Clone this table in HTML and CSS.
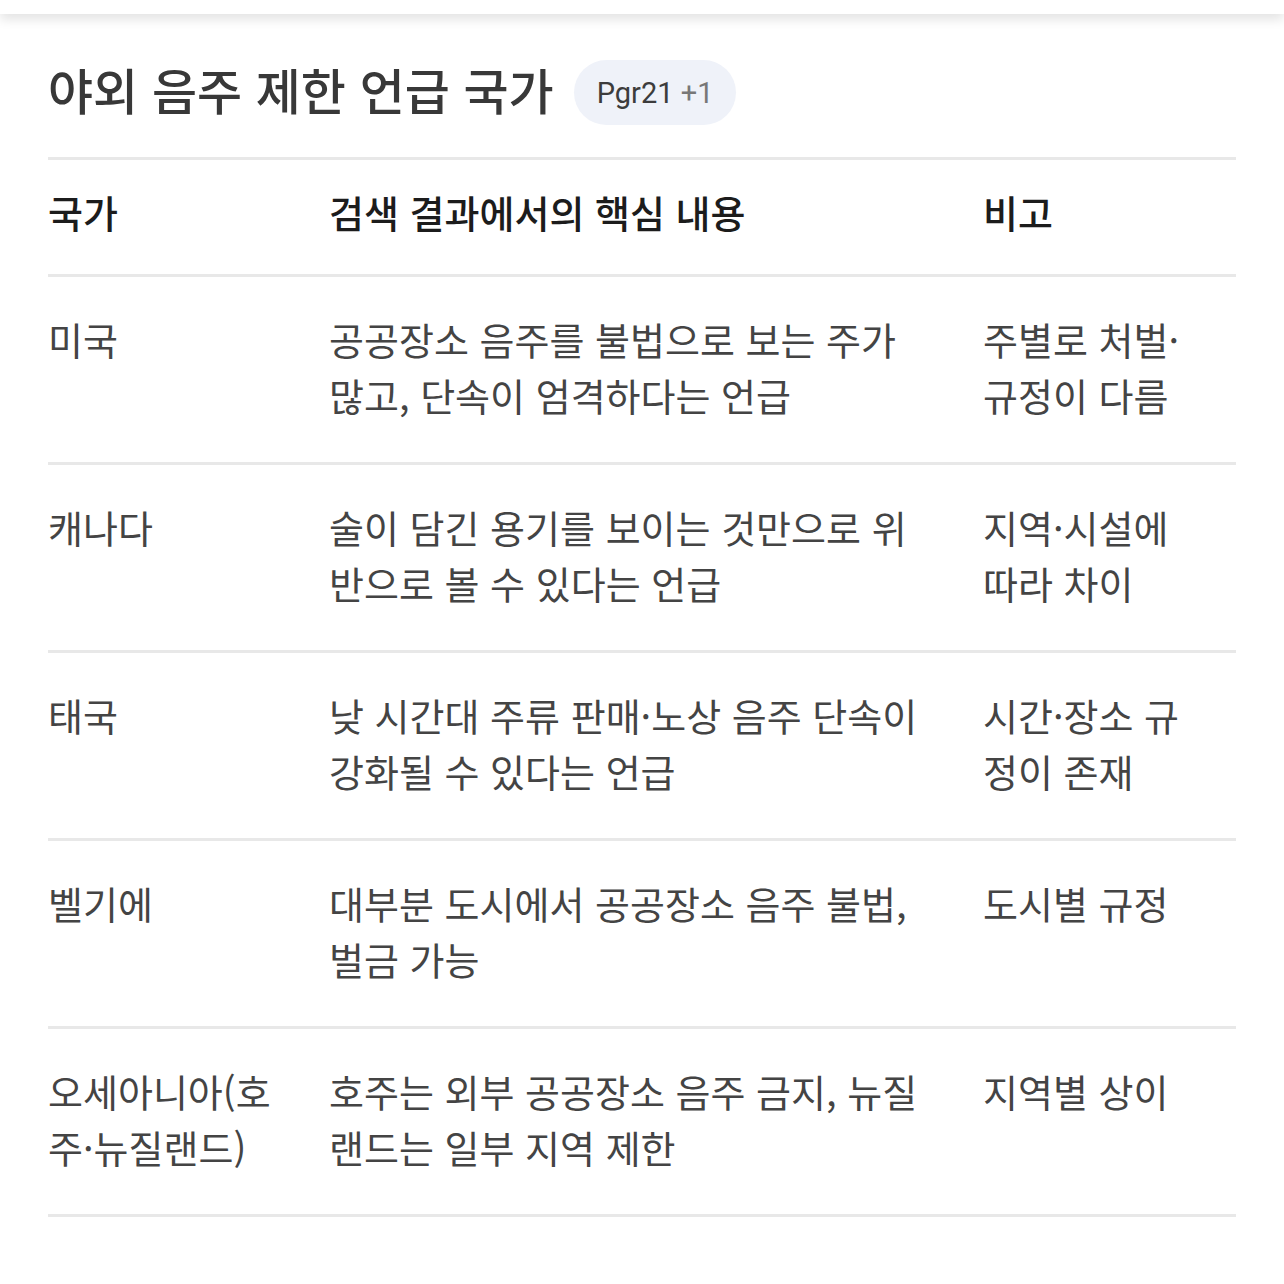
FILE: index.html
```html
<!DOCTYPE html>
<html lang="ko">
<head>
<meta charset="utf-8">
<link rel="stylesheet" href="styles.css">
</head>
<body>
<div class="topbar"></div>
<main class="page">
  <div class="title-row">
    <h1 class="title">야외 음주 제한 언급 국가</h1>
    <span class="badge">Pgr21 <span class="badge-more">+1</span></span>
  </div>
  <table class="tbl">
    <thead>
      <tr>
        <th class="c1">국가</th>
        <th class="c2">검색 결과에서의 핵심 내용</th>
        <th class="c3">비고</th>
      </tr>
    </thead>
    <tbody>
      <tr>
        <td>미국</td>
        <td class="mid">공공장소 음주를 불법으로 보는 주가 많고, 단속이 엄격하다는 언급</td>
        <td>주별로 처벌·규정이 다름</td>
      </tr>
      <tr>
        <td>캐나다</td>
        <td class="mid">술이 담긴 용기를 보이는 것만으로 위반으로 볼 수 있다는 언급</td>
        <td>지역·시설에 따라 차이</td>
      </tr>
      <tr>
        <td>태국</td>
        <td class="mid">낮 시간대 주류 판매·노상 음주 단속이 강화될 수 있다는 언급</td>
        <td>시간·장소 규정이 존재</td>
      </tr>
      <tr>
        <td>벨기에</td>
        <td class="mid">대부분 도시에서 공공장소 음주 불법, 벌금 가능</td>
        <td>도시별 규정</td>
      </tr>
      <tr>
        <td>오세아니아(호주·뉴질랜드)</td>
        <td class="mid">호주는 외부 공공장소 음주 금지, 뉴질랜드는 일부 지역 제한</td>
        <td>지역별 상이</td>
      </tr>
    </tbody>
  </table>
</main>
</body>
</html>
```

FILE: styles.css
```css
html, body {
  margin: 0;
  padding: 0;
  background: #ffffff;
}
body {
  font-family: "Noto Sans CJK KR", "Noto Sans", sans-serif;
  color: #444444;
}
.topbar {
  height: 14px;
  background: #ffffff;
  box-shadow: 0 5px 12px rgba(0, 0, 0, 0.12);
  position: relative;
  z-index: 1;
}
.page {
  padding: 46px 48px 0 48px;
}
.title-row {
  display: flex;
  align-items: center;
  gap: 20px;
  height: 65px;
  margin-bottom: 32px;
}
.title {
  margin: 0;
  font-size: 49px;
  font-weight: 500;
  color: #383838;
  line-height: 56px;
  margin-top: -8px;
}
.badge {
  display: inline-flex;
  align-items: center;
  height: 65px;
  padding: 0 23px;
  border-radius: 33px;
  background: #eff2f9;
  font-family: Roboto, "Noto Sans", sans-serif;
  font-size: 29px;
  color: #3c3c3c;
  white-space: pre;
}
.badge-more {
  color: #777777;
}
.tbl {
  width: 100%;
  border-collapse: collapse;
  table-layout: fixed;
}
.tbl th, .tbl td {
  box-sizing: border-box;
  text-align: left;
  vertical-align: top;
  font-size: 38px;
  line-height: 56px;
  padding: 34px 32px 39px 0;
  border-top: 3px solid #e8e8e8;
  border-bottom: 3px solid #e8e8e8;
}
.tbl th {
  font-weight: 500;
  color: #1c1c1c;
  padding-top: 24px;
  padding-bottom: 34px;
}
.tbl td {
  font-weight: 400;
  color: #444444;
}
.tbl td.mid {
  padding-right: 54px;
}
.c1 { width: 281px; }
.c2 { width: 654px; }
```
